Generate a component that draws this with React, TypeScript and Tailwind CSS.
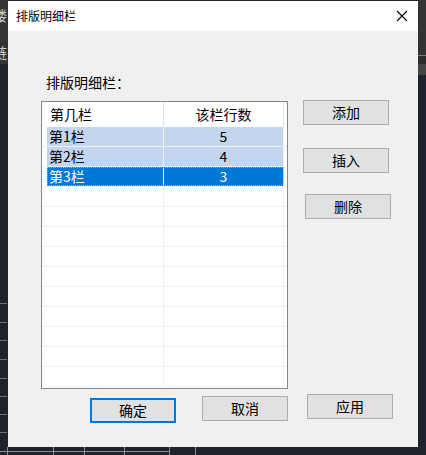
import React from 'react'

// Layout dialog "排版明细栏" over a dark CAD canvas.

const FONT = { fontFamily: '"Noto Sans CJK SC", "Noto Sans", sans-serif' }

const ROWS = [
  { name: '第1栏', count: '5', state: 'hl' },
  { name: '第2栏', count: '4', state: 'hl' },
  { name: '第3栏', count: '3', state: 'sel' },
]

const EMPTY = Array.from({ length: 10 })

function Btn({ label, className = '' }: { label: string; className?: string }) {
  return (
    <button
      className={`flex h-[25px] w-[86px] items-center justify-center border border-[#adadad] bg-[#e1e1e1] text-[14px] text-black ${className}`}
    >
      {label}
    </button>
  )
}

function Row({ name, count, state }: { name?: string; count?: string; state?: string }) {
  const bg = state === 'sel' ? 'bg-[#0078d7] text-white' : state === 'hl' ? 'bg-[#c4d5f0] text-black' : ''
  return (
    <div className="flex h-[20px] border-b border-[#f0f0f0] text-[14px] leading-[19px]">
      <div className="w-[122px] shrink-0 border-r border-[#f0f0f0] pl-[5px]">
        <div className={`h-full pl-[2px] ${bg}`}>{name}</div>
      </div>
      <div className={`w-[120px] shrink-0 border-r border-[#f0f0f0] text-center ${bg}`}>{count}</div>
      {state === 'sel' && (
        <div className="pointer-events-none absolute left-[5px] h-[19px] w-[237px] border border-dotted border-[#f0a050]" />
      )}
    </div>
  )
}

export default function App() {
  return (
    <div className="relative h-[455px] w-[426px] overflow-hidden bg-[#1e232c]" style={FONT}>
      {/* ── CAD canvas behind the dialog ─────────────────────────────────── */}
      <div className="absolute left-0 top-0 h-[64px] w-[8px] overflow-hidden bg-[#333333] text-[14px] leading-none text-[#cfcfcf]">
        <span className="absolute left-[-7px] top-[8px]">楼</span>
        <span className="absolute left-[-7px] top-[45px]">链</span>
      </div>
      {[303, 322, 340, 359, 378, 396, 414, 432].map((y) => (
        <div key={y} className="absolute left-0 h-[1px] w-[7px] bg-[#6e737a]" style={{ top: y }} />
      ))}
      <div className="absolute left-0 top-[451px] h-[1px] w-[169px] bg-[#8a8d92]" />
      {[7, 53, 84, 124, 169, 195].map((x) => (
        <div key={x} className="absolute top-[447px] h-[8px] w-[1px] bg-[#8a8d92]" style={{ left: x }} />
      ))}
      <div className="absolute right-0 top-0 h-[55px] w-[8px] bg-[#333333]" />
      <div className="absolute right-0 top-[55px] h-[1px] w-[8px] bg-[#7a7a7a]" />
      <div className="absolute right-0 top-[56px] h-[8px] w-[8px] bg-[#2c2c2c]" />
      <div className="absolute right-0 top-[64px] h-[11px] w-[8px] bg-[#454545]" />

      {/* ── Dialog ───────────────────────────────────────────────────────── */}
      <div className="absolute left-[8px] top-[1px] flex h-[446px] w-[410px] flex-col bg-[#f0f0f0]">
        <div className="flex h-[30px] shrink-0 items-center justify-between bg-white pl-[8px] pr-[10px]">
          <span className="text-[12px] text-black">排版明细栏</span>
          <svg width="12" height="12" viewBox="0 0 12 12" className="text-black">
            <path d="M1 1 L11 11 M11 1 L1 11" stroke="currentColor" strokeWidth="1.1" fill="none" />
          </svg>
        </div>

        <div className="flex flex-col pl-[33px] pt-[41px]">
          <div className="ml-[5px] h-[20px] text-[14px] leading-[20px] text-black">排版明细栏：</div>

          <div className="mt-[9px] flex items-start">
            {/* list view */}
            <div className="h-[288px] w-[247px] shrink-0 border border-[#828790] bg-white">
              <div className="flex h-[25px] text-[14px] leading-[25px] text-black">
                <div className="w-[122px] shrink-0 border-r border-[#e5e5e5] pl-[8px]">第几栏</div>
                <div className="w-[120px] shrink-0 border-r border-[#e5e5e5] text-center">该栏行数</div>
              </div>
              <div className="relative">
                {ROWS.map((r) => (
                  <Row key={r.name} {...r} />
                ))}
                {EMPTY.map((_, i) => (
                  <Row key={i} />
                ))}
              </div>
            </div>

            {/* side buttons */}
            <div className="ml-[15px] flex flex-col">
              <Btn label="添加" className="mt-[-1px]" />
              <Btn label="插入" className="mt-[23px]" />
              <Btn label="删除" className="ml-[2px] mt-[21px] w-[85px]" />
            </div>
          </div>

          <div className="mt-[5px] flex items-start">
            <button className="ml-[49px] mt-[4px] flex h-[25px] w-[86px] items-center justify-center border-2 border-[#0078d7] bg-[#e1e1e1] text-[14px] text-black">
              确定
            </button>
            <Btn label="取消" className="ml-[26px] mt-[2px]" />
            <Btn label="应用" className="ml-[19px]" />
          </div>
        </div>
      </div>
    </div>
  )
}
